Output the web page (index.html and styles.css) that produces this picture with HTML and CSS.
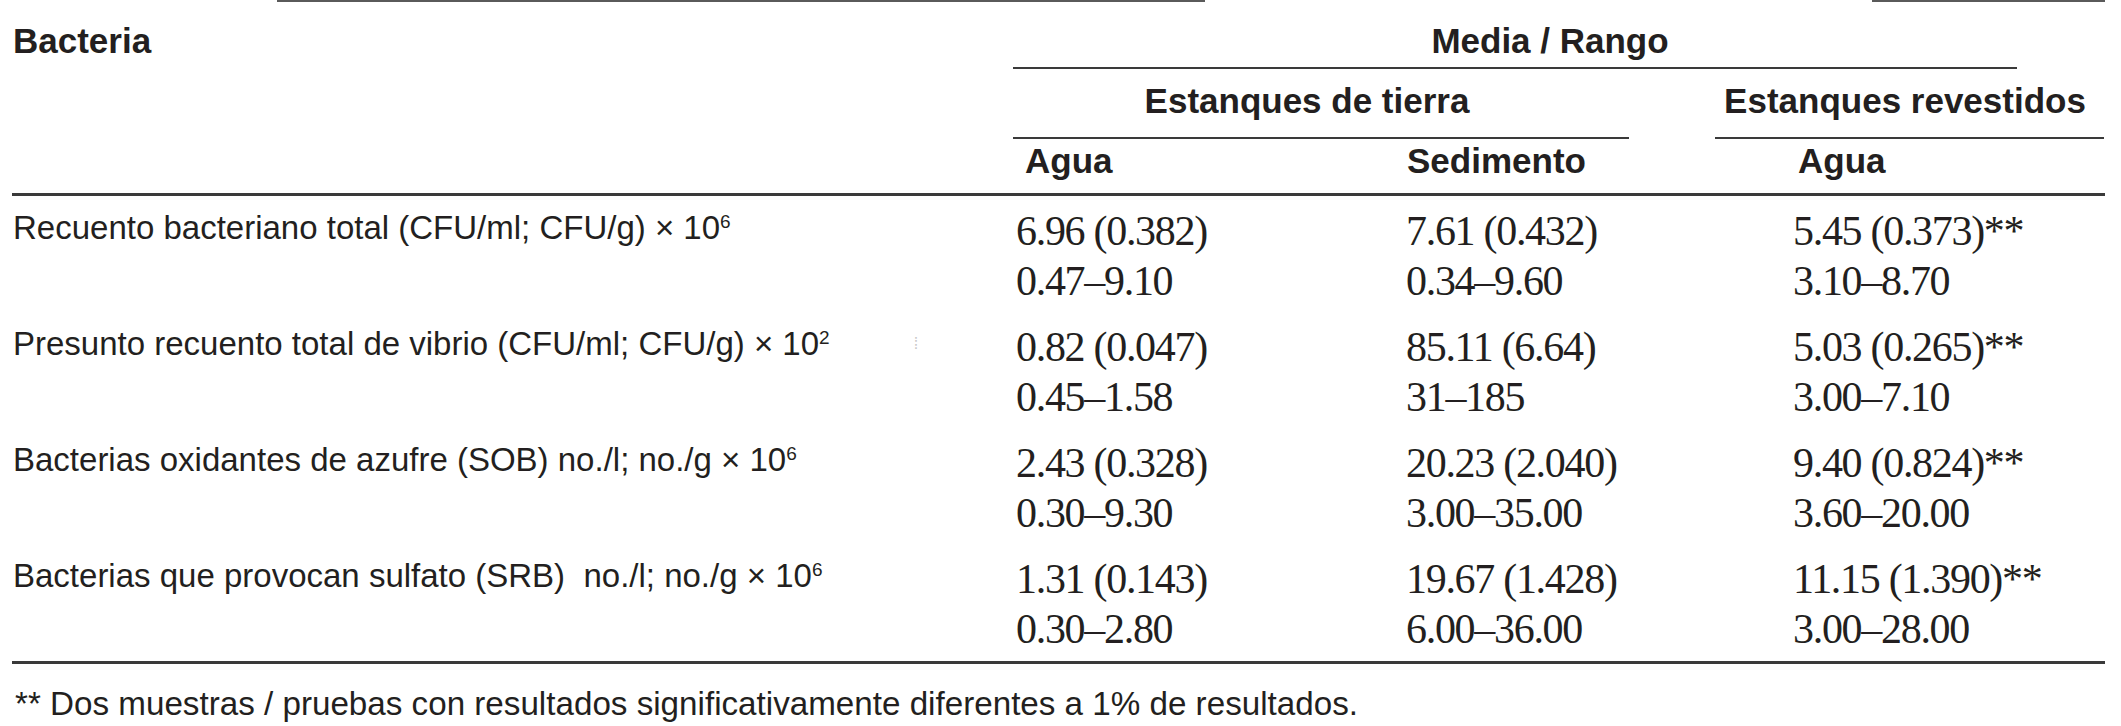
FILE: index.html
```html
<!DOCTYPE html>
<html lang="es">
<head>
<meta charset="utf-8">
<title>Bacteria</title>
<link rel="stylesheet" href="styles.css">
</head>
<body>
<div class="page">
  <div class="top-rules">
    <span class="top-rule top-rule-a"></span>
    <span class="top-rule top-rule-b"></span>
  </div>
  <div class="table">
    <div class="head">
      <div class="h-bacteria">Bacteria</div>
      <div class="h-media">Media / Rango</div>
      <div class="h-tierra">Estanques de tierra</div>
      <div class="h-revest">Estanques revestidos</div>
      <div class="h-sub h-sub-a">Agua</div>
      <div class="h-sub h-sub-b">Sedimento</div>
      <div class="h-sub h-sub-c">Agua</div>
    </div>
    <div class="body">
      <div class="row">
        <div class="label">Recuento bacteriano total (CFU/ml; CFU/g) × 10<sup class="sup">6</sup></div>
        <div class="num num-a">6.96 (0.382)<br>0.47–9.10</div>
        <div class="num num-b">7.61 (0.432)<br>0.34–9.60</div>
        <div class="num num-c">5.45 (0.373)**<br>3.10–8.70</div>
      </div>
      <div class="row">
        <div class="label">Presunto recuento total de vibrio (CFU/ml; CFU/g) × 10<sup class="sup">2</sup><span class="speck">⁞</span></div>
        <div class="num num-a">0.82 (0.047)<br>0.45–1.58</div>
        <div class="num num-b">85.11 (6.64)<br>31–185</div>
        <div class="num num-c">5.03 (0.265)**<br>3.00–7.10</div>
      </div>
      <div class="row">
        <div class="label">Bacterias oxidantes de azufre (SOB) no./l; no./g × 10<sup class="sup">6</sup></div>
        <div class="num num-a">2.43 (0.328)<br>0.30–9.30</div>
        <div class="num num-b">20.23 (2.040)<br>3.00–35.00</div>
        <div class="num num-c">9.40 (0.824)**<br>3.60–20.00</div>
      </div>
      <div class="row">
        <div class="label">Bacterias que provocan sulfato (SRB)&nbsp; no./l; no./g × 10<sup class="sup">6</sup></div>
        <div class="num num-a">1.31 (0.143)<br>0.30–2.80</div>
        <div class="num num-b">19.67 (1.428)<br>6.00–36.00</div>
        <div class="num num-c">11.15 (1.390)**<br>3.00–28.00</div>
      </div>
    </div>
    <div class="footnote">** Dos muestras / pruebas con resultados significativamente diferentes a 1% de resultados.</div>
  </div>
</div>
</body>
</html>
```

FILE: styles.css
```css
html, body {
  margin: 0;
  padding: 0;
  background: #ffffff;
}

body {
  width: 2121px;
  height: 726px;
  overflow: hidden;
  color: #231f20;
  font-family: "Liberation Sans", Arial, sans-serif;
}

.page {
  display: flex;
  flex-direction: column;
}

.top-rules {
  display: flex;
  height: 2px;
}

.top-rule {
  display: block;
  height: 2px;
  background: #5a5a5a;
}

.top-rule-a {
  margin-left: 277px;
  width: 928px;
}

.top-rule-b {
  margin-left: 667px;
  width: 233px;
}

.table {
  margin-left: 12px;
  width: 2093px;
  margin-top: 19px;
}

.head {
  display: grid;
  grid-template-columns: 1001px 387px 315px 390px;
  grid-template-rows: auto auto auto;
  border-bottom: 3px solid #3a3a3a;
  font-weight: bold;
  font-size: 35px;
  line-height: 40px;
}

.h-bacteria {
  grid-column: 1;
  grid-row: 1 / 4;
  padding-left: 1px;
}

.h-media {
  grid-column: 2 / 5;
  grid-row: 1;
  margin-right: 88px;
  padding-left: 70px;
  padding-bottom: 6px;
  border-bottom: 2px solid #3a3a3a;
  text-align: center;
}

.h-tierra {
  grid-column: 2 / 4;
  grid-row: 2;
  margin-right: 86px;
  padding-top: 12px;
  padding-bottom: 16px;
  padding-right: 28px;
  border-bottom: 2px solid #3a3a3a;
  text-align: center;
}

.h-revest {
  grid-column: 4;
  grid-row: 2;
  margin-right: 1px;
  padding-top: 12px;
  padding-bottom: 16px;
  padding-right: 9px;
  border-bottom: 2px solid #3a3a3a;
  text-align: center;
  white-space: nowrap;
}

.h-sub {
  grid-row: 3;
  padding-top: 2px;
  padding-bottom: 12px;
}

.h-sub-a {
  grid-column: 2;
  padding-left: 12px;
}

.h-sub-b {
  grid-column: 3;
  padding-left: 7px;
}

.h-sub-c {
  grid-column: 4;
  padding-left: 83px;
}

.body {
  display: flex;
  flex-direction: column;
  gap: 16px;
  padding-top: 10px;
  padding-bottom: 7px;
  border-bottom: 3px solid #3a3a3a;
}

.row {
  display: grid;
  grid-template-columns: 1001px 387px 315px 390px;
  height: 100px;
}

.label {
  font-size: 33px;
  line-height: 44px;
  padding-left: 1px;
  white-space: nowrap;
}

.sup {
  font-size: 19px;
  line-height: 0;
  vertical-align: 11px;
}

.speck {
  display: inline-block;
  margin-left: 84px;
  font-size: 16px;
  color: #c8c8c8;
  vertical-align: 6px;
}

.num {
  font-family: "Liberation Serif", "Times New Roman", serif;
  font-size: 42px;
  line-height: 50px;
  letter-spacing: -1.3px;
  white-space: nowrap;
}

.num-a {
  padding-left: 3px;
}

.num-b {
  padding-left: 6px;
}

.num-c {
  padding-left: 78px;
}

.footnote {
  margin-top: 20px;
  padding-left: 3px;
  font-size: 33.2px;
  line-height: 40px;
  white-space: nowrap;
}
```
